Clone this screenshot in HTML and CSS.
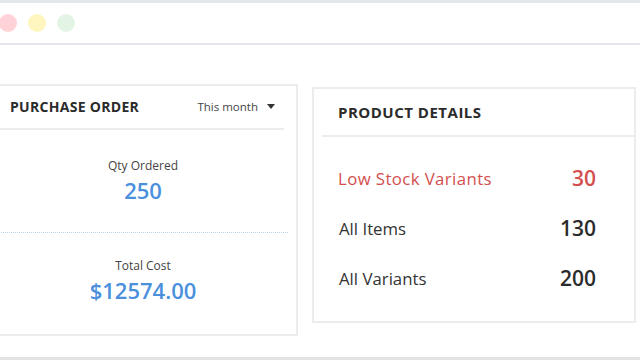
FILE: index.html
```html
<!DOCTYPE html>
<html lang="en">
<head>
    <meta charset="UTF-8">
    <meta name="viewport" content="width=device-width, initial-scale=1.0">
    <title>Inventory Dashboard</title>
    <link rel="stylesheet" href="styles.css">
</head>

<body>
    <div class="window">
        <div class="titlebar">
            <span class="dot red"></span>
            <span class="dot yellow"></span>
            <span class="dot green"></span>
        </div>

        <div class="content">
            <div class="card purchase">
                <div class="card-head">
                    <h3>PURCHASE ORDER</h3>
                    <span class="period">This month <span class="caret"></span></span>
                </div>
                <div class="stat">
                    <p class="stat-label">Qty Ordered</p>
                    <p class="stat-value">250</p>
                </div>
                <div class="dots-line"></div>
                <div class="stat">
                    <p class="stat-label">Total Cost</p>
                    <p class="stat-value">$12574.00</p>
                </div>
            </div>

            <div class="card product">
                <div class="card-head">
                    <h3>PRODUCT DETAILS</h3>
                </div>
                <ul class="rows">
                    <li class="low"><span>Low Stock Variants</span><strong>30</strong></li>
                    <li><span>All Items</span><strong>130</strong></li>
                    <li><span>All Variants</span><strong>200</strong></li>
                </ul>
            </div>
        </div>
    </div>
    <div class="bottom-bar"></div>
</body>
</html>
```

FILE: styles.css
```css
body {
    font-family: 'Open Sans', 'Lato', sans-serif;
    margin: 0;
    width: 640px;
    height: 360px;
    overflow: hidden;
    background: #fff;
    color: #333;
    position: relative;
}

.titlebar {
    height: 40px;
    border-top: 3px solid #e3e6ea;
    border-bottom: 2px solid #e3e6ea;
    display: flex;
    align-items: center;
    gap: 11px;
    margin-left: -1px;
}

.dot {
    width: 18px;
    height: 18px;
    border-radius: 50%;
}

.dot.red { background: #ffd2d7; }
.dot.yellow { background: #fff6bf; }
.dot.green { background: #e4f4e4; }

.content {
    display: flex;
    align-items: flex-start;
    gap: 14px;
    padding-top: 39px;
    margin-left: -12px;
}

.card {
    background: #fff;
    border: 2px solid #ececec;
    box-sizing: border-box;
}

.card h3 {
    margin: 0;
    font-weight: 700;
    color: #2b2b2b;
}

.purchase {
    width: 310px;
    height: 252px;
}

.purchase h3 {
    font-size: 14px;
    letter-spacing: 0.3px;
}

.purchase .card-head {
    height: 40px;
    margin-right: 12px;
    padding: 0 9px 2px 20px;
    display: flex;
    align-items: center;
    justify-content: space-between;
    border-bottom: 2px solid #ececec;
}

.period {
    font-size: 11.5px;
    color: #444;
    display: flex;
    align-items: center;
    gap: 9px;
}

.caret {
    width: 0;
    height: 0;
    border-left: 4px solid transparent;
    border-right: 4px solid transparent;
    border-top: 5px solid #333;
}

.stat {
    text-align: center;
}

.stat p {
    margin: 0;
}

.stat-label {
    font-size: 12px;
    color: #444;
    line-height: 16px;
    padding-top: 28px;
}

.stat-value {
    font-size: 22px;
    font-weight: 600;
    color: #4a90dd;
    line-height: 26px;
    padding-top: 3px;
}

.dots-line {
    margin: 29px 8px 0 0;
    border-top: 1px dotted #bcd3ea;
}

.dots-line + .stat .stat-label {
    padding-top: 25px;
}

.product {
    width: 324px;
    height: 236px;
    margin-top: 3px;
}

.product .card-head {
    height: 46px;
    margin-left: 8px;
    padding-left: 16px;
    display: flex;
    align-items: center;
    border-bottom: 2px solid #ececec;
}

.product h3 {
    font-size: 15px;
    letter-spacing: 0.5px;
}

.rows {
    list-style: none;
    margin: 0;
    padding: 16px 38px 0 24px;
}

.rows li {
    display: flex;
    justify-content: space-between;
    align-items: center;
    height: 50px;
    font-size: 16.8px;
    color: #333;
}

.rows li span {
    padding-left: 1px;
}

.rows li.low span {
    letter-spacing: 0.4px;
    padding-left: 0;
}

.rows strong {
    font-size: 21px;
    font-weight: 600;
    color: #2b2b2b;
}

.rows li.low,
.rows li.low strong {
    color: #d34e4e;
}

.bottom-bar {
    position: absolute;
    left: 0;
    right: 0;
    bottom: 0;
    height: 3px;
    background: #e3e3e3;
}
```
